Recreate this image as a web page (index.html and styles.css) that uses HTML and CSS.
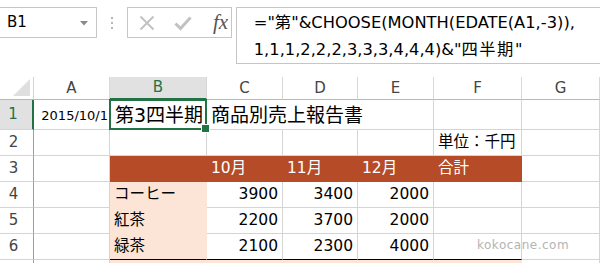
FILE: index.html
```html
<!DOCTYPE html>
<html lang="ja">
<head>
<meta charset="utf-8">
<link rel="stylesheet" href="styles.css">
</head>
<body>
<div class="app">
  <div class="fbar">
    <div class="namebox">
      <span class="nb-text">B1</span>
      <svg class="nb-arrow" width="8" height="5" viewBox="0 0 8 5"><path d="M0 0H8L4 4.5Z" fill="#8a8a8a"/></svg>
    </div>
    <div class="sep"><i></i><i></i><i></i></div>
    <div class="fxbox">
      <svg class="ic" width="18" height="18" viewBox="0 0 18 18"><path d="M2.5 2.5L15.5 15.5M15.5 2.5L2.5 15.5" stroke="#c2c2c2" stroke-width="2" fill="none"/></svg>
      <svg class="ic" width="18" height="18" viewBox="0 0 18 18"><path d="M1.5 9.5L6.5 14.5L16.5 3.5" stroke="#c2c2c2" stroke-width="3" fill="none"/></svg>
      <span class="fx">fx</span>
    </div>
    <div class="formula">
      <div>="第"&amp;CHOOSE(MONTH(EDATE(A1,-3)),</div>
      <div>1,1,1,2,2,2,3,3,3,4,4,4)&amp;"<span class="cjk">四半期</span>"</div>
    </div>
  </div>

  <div class="sheet">
    <div class="corner"><span class="tri"></span></div>
    <div class="ch">A</div>
    <div class="ch sel">B</div>
    <div class="ch">C</div>
    <div class="ch">D</div>
    <div class="ch">E</div>
    <div class="ch">F</div>
    <div class="ch">G</div>

    <div class="rh rsel">1</div>
    <div class="c date">2015/10/1</div>
    <div class="c title active">第3四半期</div>
    <div class="c title nob">商品別売上報告書</div>
    <div class="c nob"></div>
    <div class="c"></div>
    <div class="c"></div>
    <div class="c"></div>

    <div class="rh">2</div>
    <div class="c"></div>
    <div class="c"></div>
    <div class="c"></div>
    <div class="c"></div>
    <div class="c"></div>
    <div class="c txt">単位：千円</div>
    <div class="c"></div>

    <div class="rh">3</div>
    <div class="c"></div>
    <div class="c hd"></div>
    <div class="c hd">10月</div>
    <div class="c hd">11月</div>
    <div class="c hd">12月</div>
    <div class="c hd">合計</div>
    <div class="c"></div>

    <div class="rh">4</div>
    <div class="c"></div>
    <div class="c pk txt">コーヒー</div>
    <div class="c num">3900</div>
    <div class="c num">3400</div>
    <div class="c num">2000</div>
    <div class="c"></div>
    <div class="c"></div>

    <div class="rh">5</div>
    <div class="c"></div>
    <div class="c pk txt">紅茶</div>
    <div class="c num">2200</div>
    <div class="c num">3700</div>
    <div class="c num">2000</div>
    <div class="c"></div>
    <div class="c"></div>

    <div class="rh">6</div>
    <div class="c"></div>
    <div class="c pk txt last">緑茶</div>
    <div class="c num last">2100</div>
    <div class="c num last">2300</div>
    <div class="c num last">4000</div>
    <div class="c last"></div>
    <div class="c"></div>

    <div class="rh"></div>
    <div class="c"></div>
    <div class="c pk"></div>
    <div class="c pk"></div>
    <div class="c pk"></div>
    <div class="c pk"></div>
    <div class="c pk"></div>
    <div class="c"></div>
  </div>
  <div class="wm">kokocane.com</div>
</div>
</body>
</html>
```

FILE: styles.css
```css
* { box-sizing: border-box; }
html, body { margin: 0; padding: 0; background: #fff; }
body {
  width: 600px;
  height: 263px;
  overflow: hidden;
  font-family: "DejaVu Sans", "Noto Sans CJK JP", sans-serif;
  color: #000;
}
.app { position: relative; width: 600px; height: 263px; overflow: hidden; }

.fbar {
  display: flex;
  align-items: flex-start;
  padding-top: 7px;
  height: 77px;
}
.namebox {
  width: 101px;
  height: 31px;
  border: 1px solid #c6c6c6;
  border-left: none;
  display: flex;
  align-items: center;
  justify-content: space-between;
  padding: 0 8px 0 7px;
}
.nb-text { font-size: 15px; line-height: 1; }
.nb-arrow { margin-top: 1px; }
.sep {
  width: 31px;
  height: 31px;
  display: flex;
  flex-direction: column;
  align-items: center;
  justify-content: center;
  gap: 3px;
}
.sep i { display: block; width: 2px; height: 2px; background: #b5b5b5; }
.fxbox {
  width: 109px;
  height: 31px;
  border: 1px solid #c6c6c6;
  display: flex;
  align-items: center;
  padding-left: 10px;
  gap: 18px;
}
.fx {
  font-family: "Liberation Serif", "DejaVu Serif", serif;
  font-style: italic;
  font-size: 21px;
  color: #555;
  line-height: 1;
  margin-left: 3px;
}
.formula {
  margin-left: 4px;
  width: 380px;
  height: 57px;
  border: 1px solid #c6c6c6;
  border-right: none;
  padding: 1px 0 0 17px;
  font-size: 16.3px;
  line-height: 27px;
  white-space: nowrap;
}
.cjk { letter-spacing: 1.5px; }

.sheet {
  display: grid;
  grid-template-columns: 34px 76px 97px 76px 75px 76px 88px 78px;
  grid-template-rows: 23px 30px 26px 26px 26px 26px 26px 26px;
}
.corner {
  border-right: 1px solid #d4d4d4;
  border-bottom: 1px solid #b8b8b8;
  position: relative;
}
.tri {
  position: absolute;
  right: 3px;
  bottom: 3px;
  width: 0; height: 0;
  border-left: 17px solid transparent;
  border-bottom: 17px solid #dfdfdf;
}
.ch {
  border-right: 1px solid #d8d8d8;
  border-bottom: 1px solid #b8b8b8;
  font-size: 15px;
  color: #444;
  display: flex;
  align-items: center;
  justify-content: center;
  line-height: 1;
}
.ch.sel { background: #e1e1e1; color: #217346; border-bottom: 2px solid #217346; }
.rh {
  border-right: 1px solid #9e9e9e;
  border-bottom: 1px solid #d4d4d4;
  font-size: 15px;
  color: #444;
  display: flex;
  align-items: center;
  justify-content: center;
  padding-right: 6px;
  line-height: 1;
}
.rh.rsel { background: #e1e1e1; color: #217346; border-right: 2px solid #217346; }

.c {
  border-right: 1px solid #d4d4d4;
  border-bottom: 1px solid #d4d4d4;
  display: flex;
  align-items: center;
  font-size: 15.5px;
  line-height: 1;
  white-space: nowrap;
  padding: 0 4px;
  min-width: 0;
}
.c.nob { border-right-color: transparent; }
.date { justify-content: flex-end; font-size: 13px; padding: 2px 1px 0 0; }
.title { font-size: 19px; overflow: visible; padding-top: 1px; }
.active { position: relative; padding-left: 5px; }
.active::after {
  content: "";
  position: absolute;
  left: -1px; top: -1px; right: -1px; bottom: -1px;
  border: 2px solid #217346;
  z-index: 2;
}
.active::before {
  content: "";
  position: absolute;
  right: -4px; bottom: -4px;
  width: 7px; height: 7px;
  background: #217346;
  border: 1px solid #fff;
  z-index: 3;
}
.txt { padding-left: 4px; }
.hd {
  background: #b54b27;
  border-color: #b54b27;
  color: #fff;
  padding-left: 4px;
}
.pk { background: #fce4d6; border-color: #fce4d6; }
.num { justify-content: flex-end; padding-right: 4px; }
.c.last { border-bottom-color: #000; }

.wm {
  position: absolute;
  left: 477px;
  top: 238px;
  font-family: "DejaVu Sans", sans-serif;
  font-size: 12px;
  color: #b4b4b4;
  letter-spacing: 0.5px;
}
```
